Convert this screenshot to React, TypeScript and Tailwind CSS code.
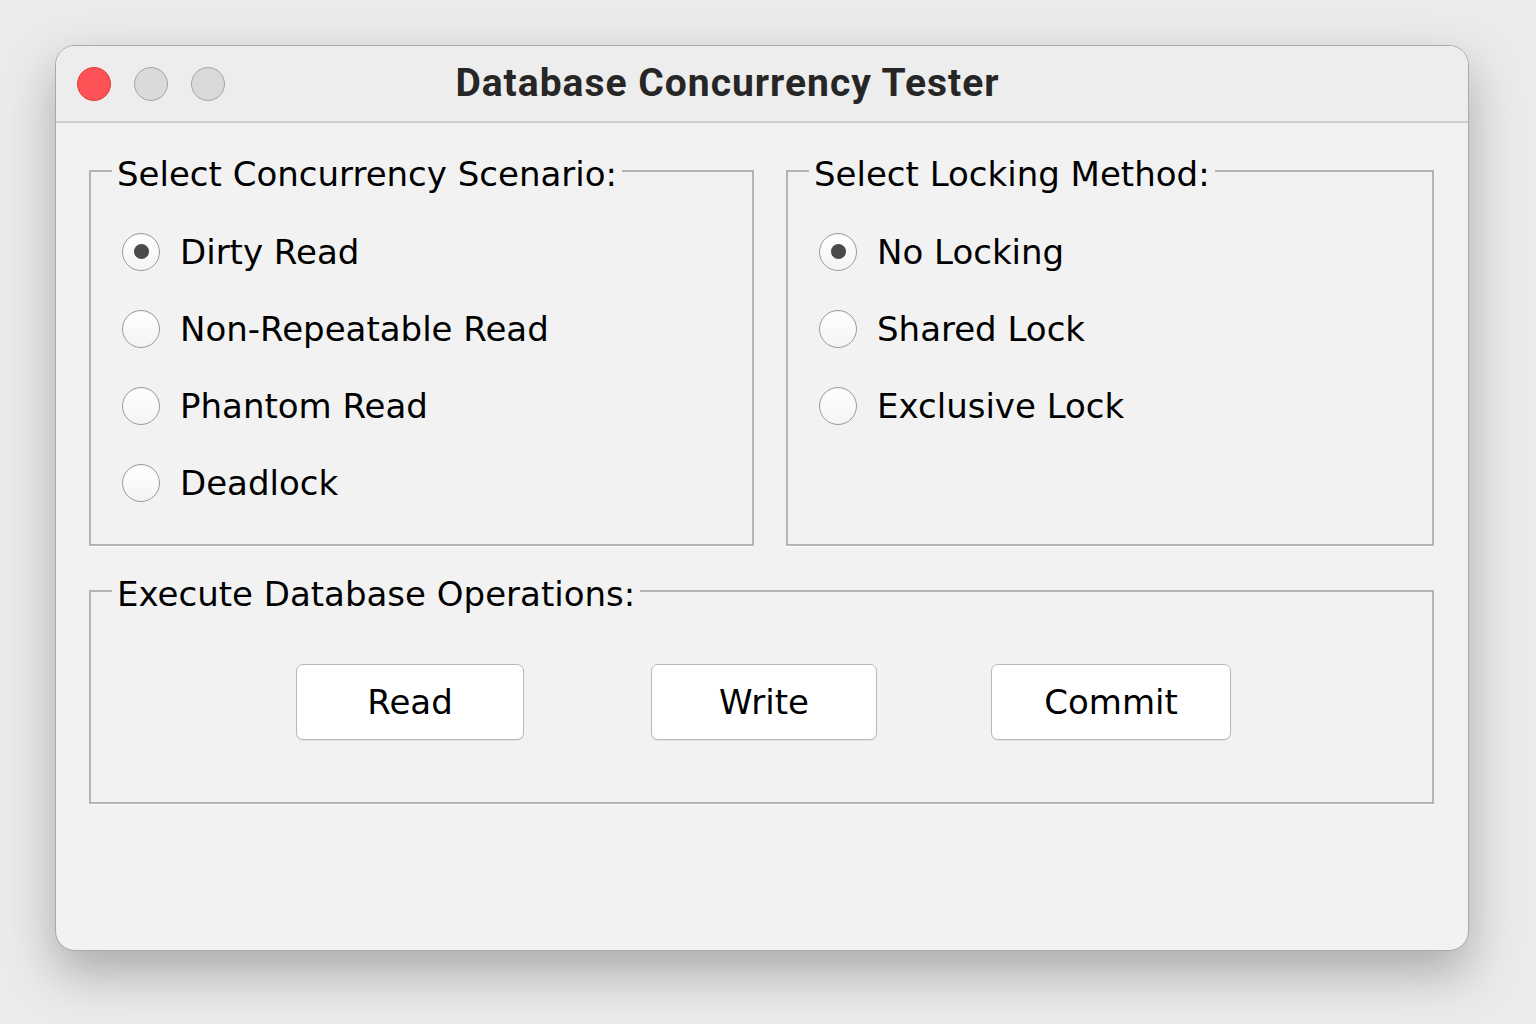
import React, { useState } from 'react';

const FONT = { fontFamily: '"DejaVu Sans", "Noto Sans", sans-serif' };

type RadioProps = { label: string; checked: boolean; onSelect: () => void };

const Radio: React.FC<RadioProps> = ({ label, checked, onSelect }) => (
    <div className="flex items-center h-[77px] cursor-pointer" onClick={onSelect}>
        <div className="w-[38px] h-[38px] rounded-full border-[1.5px] border-[#9c9c9c] bg-gradient-to-b from-white to-[#f4f4f4] flex items-center justify-center shadow-[inset_0_1px_1px_rgba(0,0,0,0.05)]">
            {checked && <div className="w-[15px] h-[15px] rounded-full bg-[#4a4a4a]"></div>}
        </div>
        <span className="ml-[20px] text-[34px] text-black leading-none">{label}</span>
    </div>
);

const Group: React.FC<{ title: string; className: string; children: React.ReactNode }> = ({ title, className, children }) => (
    <fieldset className={`border-2 border-[#b4b4b4] shadow-[0_1px_0_#ffffff] ${className}`}>
        <legend className="ml-[21px] px-[5px] pt-[6px] text-[34px] leading-[40px] text-black">{title}</legend>
        {children}
    </fieldset>
);

const Button: React.FC<{ label: string; width: string }> = ({ label, width }) => (
    <button className={`${width} h-[76px] bg-white border border-[#b8b8b8] rounded-[7px] text-[34px] text-black shadow-[0_1px_1px_rgba(0,0,0,0.06)]`}>
        {label}
    </button>
);

const App: React.FC = () => {
    const [scenario, setScenario] = useState('Dirty Read');
    const [lock, setLock] = useState('No Locking');

    return (
        <div className="w-[1536px] h-[1024px] bg-[#ebebeb] pt-[45px] pl-[55px]" style={FONT}>
            <div className="w-[1414px] h-[906px] rounded-[20px] bg-[#f2f2f2] border border-[#a9a9a9] shadow-[0_22px_50px_rgba(0,0,0,0.28)] overflow-hidden">
                {/* Title bar */}
                <div className="relative h-[77px] bg-[#eeeded] border-b-2 border-[#cfcfcf] flex items-center">
                    <div className="flex items-center gap-[23px] pl-[21px]">
                        <div className="w-[34px] h-[34px] rounded-full bg-[#fe5257] border border-[#e0393f]"></div>
                        <div className="w-[34px] h-[34px] rounded-full bg-[#dadada] border border-[#a3a3a3]"></div>
                        <div className="w-[34px] h-[34px] rounded-full bg-[#dadada] border border-[#a3a3a3]"></div>
                    </div>
                    <div
                        className="absolute left-[380px] w-[583px] text-center text-[39px] tracking-[1px] font-bold text-[#262626]"
                        style={{ fontFamily: 'Roboto, "Liberation Sans", sans-serif' }}
                    >
                        Database Concurrency Tester
                    </div>
                </div>

                {/* Body */}
                <div className="px-[33px] pt-[25px]">
                    <div className="flex gap-[32px]">
                        <Group title="Select Concurrency Scenario:" className="w-[665px] h-[398px]">
                            <div className="pl-[31px] pt-[19px]">
                                {['Dirty Read', 'Non-Repeatable Read', 'Phantom Read', 'Deadlock'].map((s) => (
                                    <Radio key={s} label={s} checked={scenario === s} onSelect={() => setScenario(s)} />
                                ))}
                            </div>
                        </Group>
                        <Group title="Select Locking Method:" className="w-[648px] h-[398px]">
                            <div className="pl-[31px] pt-[19px]">
                                {['No Locking', 'Shared Lock', 'Exclusive Lock'].map((s) => (
                                    <Radio key={s} label={s} checked={lock === s} onSelect={() => setLock(s)} />
                                ))}
                            </div>
                        </Group>
                    </div>

                    <Group title="Execute Database Operations:" className="mt-[22px] w-[1345px] h-[236px]">
                        <div className="flex items-center pl-[205px] pt-[50px]">
                            <Button label="Read" width="w-[228px]" />
                            <div className="ml-[127px]">
                                <Button label="Write" width="w-[226px]" />
                            </div>
                            <div className="ml-[114px]">
                                <Button label="Commit" width="w-[240px]" />
                            </div>
                        </div>
                    </Group>
                </div>
            </div>
        </div>
    );
};

export default App;
